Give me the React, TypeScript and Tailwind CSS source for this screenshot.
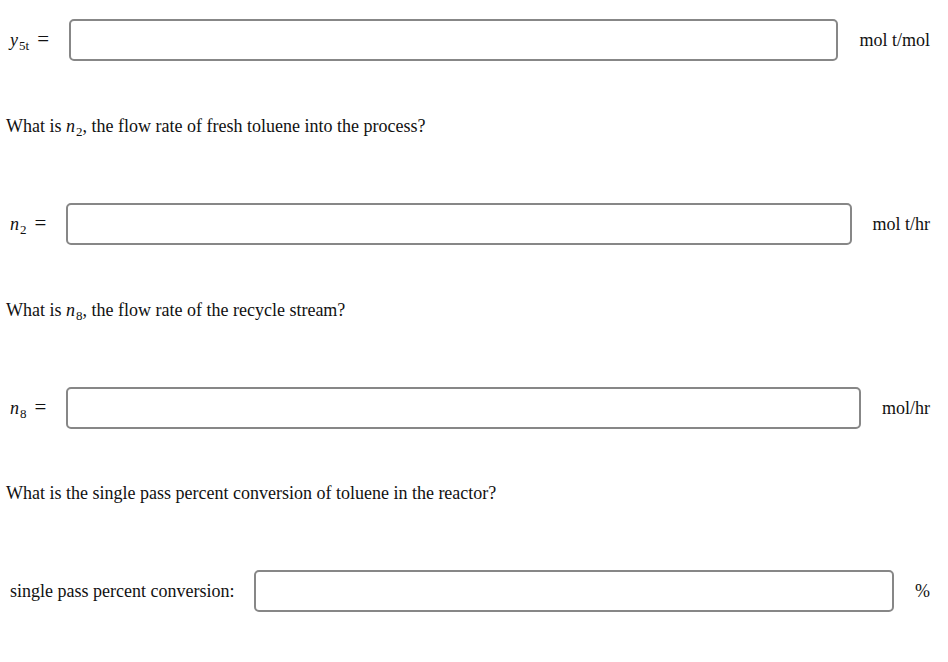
const serif = { fontFamily: '"Liberation Serif", "Times New Roman", serif' };

function Sym({ base, sub }: { base: string; sub: string }) {
  return (
    <span className="whitespace-nowrap">
      <span className="italic">{base}</span>
      <span className="text-[13px] relative top-[4px] ml-[1px]">{sub}</span>
    </span>
  );
}

function AnswerRow({ label, unit }: { label: React.ReactNode; unit: string }) {
  return (
    <div className="flex items-center h-[42px] pl-[10px] pr-[18px]">
      <div className="whitespace-nowrap text-[18px]">{label}</div>
      <input
        type="text"
        className="flex-1 h-[42px] ml-[20px] mr-[21px] border-2 border-[#878787] rounded-[5px] bg-white outline-none px-2"
      />
      <div className="whitespace-nowrap text-[18px]">{unit}</div>
    </div>
  );
}

function Question({ children }: { children: React.ReactNode }) {
  return <p className="pl-[6px] text-[18px] leading-[18px]">{children}</p>;
}

function Eq({ ml }: { ml: string }) {
  return <span className={`text-[21px] leading-none ${ml}`}>=</span>;
}

export default function App() {
  return (
    <main className="w-[948px] min-h-[662px] bg-white text-[#111] pt-[19px]" style={serif}>
      <AnswerRow
        label={
          <>
            <Sym base="y" sub="5t" />
            <Eq ml="ml-[8px]" />
          </>
        }
        unit="mol t/mol"
      />
      <div className="mt-[56px]">
        <Question>
          What is <Sym base="n" sub="2" />, the flow rate of fresh toluene into the process?
        </Question>
      </div>
      <div className="mt-[66px]">
        <AnswerRow
          label={
            <>
              <Sym base="n" sub="2" />
              <Eq ml="ml-[8px]" />
            </>
          }
          unit="mol t/hr"
        />
      </div>
      <div className="mt-[56px]">
        <Question>
          What is <Sym base="n" sub="8" />, the flow rate of the recycle stream?
        </Question>
      </div>
      <div className="mt-[66px]">
        <AnswerRow
          label={
            <>
              <Sym base="n" sub="8" />
              <Eq ml="ml-[8px]" />
            </>
          }
          unit="mol/hr"
        />
      </div>
      <div className="mt-[55px]">
        <Question>What is the single pass percent conversion of toluene in the reactor?</Question>
      </div>
      <div className="mt-[68px]">
        <AnswerRow label="single pass percent conversion:" unit="%" />
      </div>
    </main>
  );
}
